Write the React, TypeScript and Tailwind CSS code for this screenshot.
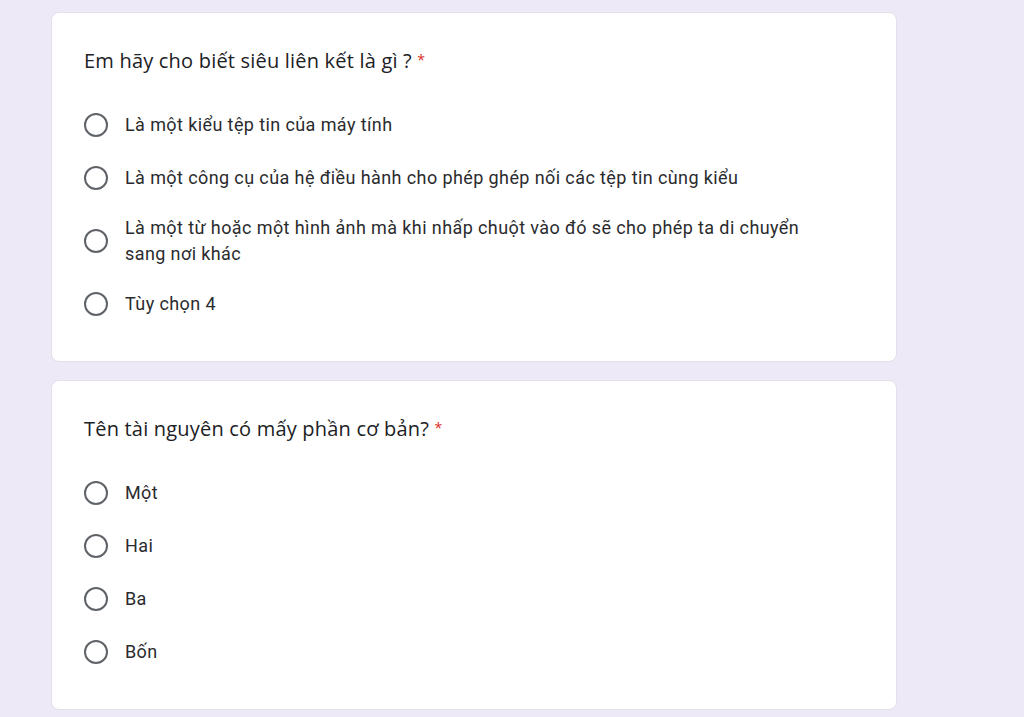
import React from 'react';

type Question = {
  title: string;
  options: string[];
};

const questions: Question[] = [
  {
    title: 'Em hãy cho biết siêu liên kết là gì ?',
    options: [
      'Là một kiểu tệp tin của máy tính',
      'Là một công cụ của hệ điều hành cho phép ghép nối các tệp tin cùng kiểu',
      'Là một từ hoặc một hình ảnh mà khi nhấp chuột vào đó sẽ cho phép ta di chuyển sang nơi khác',
      'Tùy chọn 4',
    ],
  },
  {
    title: 'Tên tài nguyên có mấy phần cơ bản?',
    options: ['Một', 'Hai', 'Ba', 'Bốn'],
  },
];

const Radio = () => (
  <span className="block w-6 h-6 shrink-0 rounded-full border-2 border-[#5f6368]" />
);

const QuestionCard = ({ q }: { q: Question }) => (
  <div className="bg-white rounded-lg border border-[#e3e0ea] pl-8 pr-8 pt-[33px] pb-[41px]">
    <div className="text-[20px] leading-7 text-[#202124] font-['Open_Sans',sans-serif] tracking-[0.2px]">
      {q.title} <span className="text-[14px] align-[3px] text-[#d93025]">*</span>
    </div>
    <div className="mt-[34px] flex flex-col gap-[21px]">
      {q.options.map((o) => (
        <label key={o} className="flex items-center gap-[17px] min-h-8">
          <Radio />
          <span className="max-w-[700px] text-[18px] leading-[26px] text-[#2a2b2e] font-['Roboto',sans-serif] tracking-[0.4px]">
            {o}
          </span>
        </label>
      ))}
    </div>
  </div>
);

export default function App() {
  return (
    <div className="min-h-screen bg-[#ede9f7] pt-3 pl-[51px] w-[1024px]">
      <div className="w-[846px] flex flex-col gap-[18px]">
        {questions.map((q) => (
          <QuestionCard key={q.title} q={q} />
        ))}
      </div>
    </div>
  );
}
